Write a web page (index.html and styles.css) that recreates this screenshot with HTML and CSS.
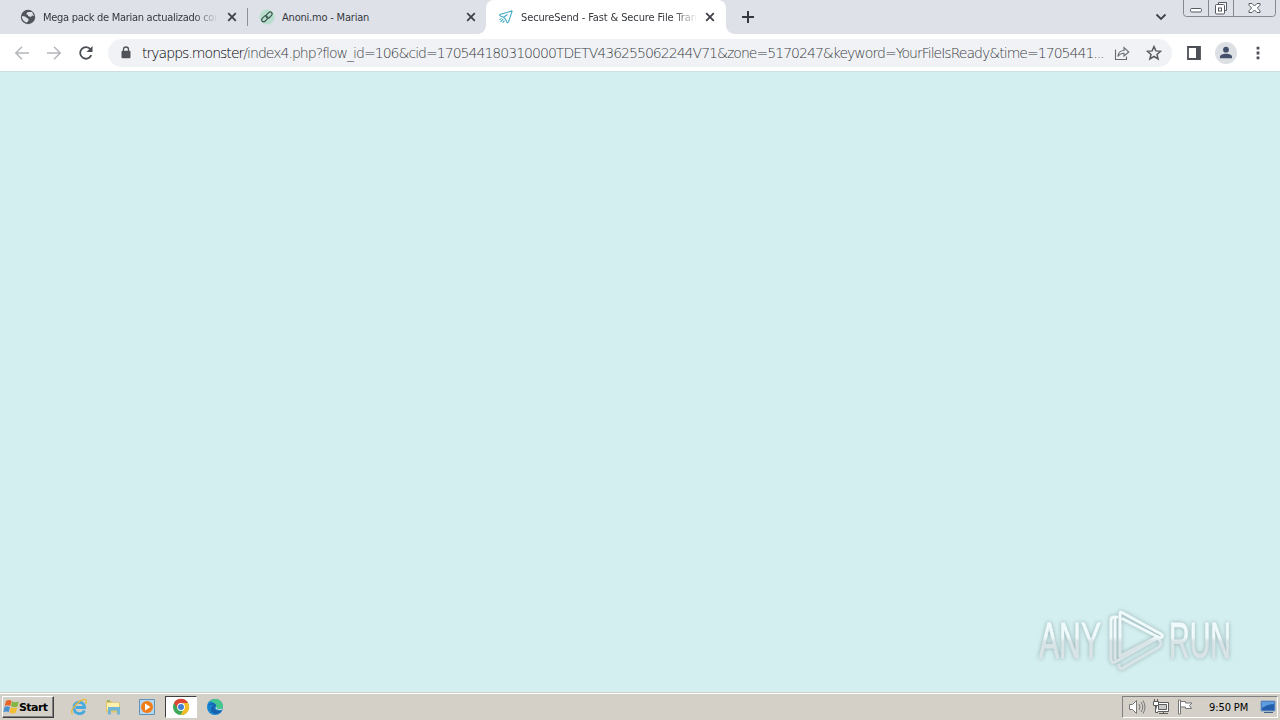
FILE: index.html
```html
<!DOCTYPE html>
<html lang="en">
<head>
    <meta charset="UTF-8">
    <title>SecureSend - Fast &amp; Secure File Transfer</title>
    <link rel="stylesheet" href="styles.css">
</head>
<body>
    <div class="tab-strip">
        <div class="tab first">
            <svg class="favicon" viewBox="0 0 16 16"><circle cx="8" cy="8" r="7.2" fill="#50555b"/><path d="M2 7l3 .5 2 1.500 1.500 1v1.500L7 13.500C4 13 1.500 10 2 7zM8 3h4l2 4-2-.5-1 1.500-3-1V6L6 5z" fill="#dee1e6"/></svg>
            <span class="tab-title t1">Mega pack de Marian actualizado con</span>
            <svg class="close" viewBox="0 0 10 10"><path d="M1.2 1.2l7.6 7.6M8.8 1.2L1.2 8.8"/></svg>
        </div>
        <div class="tab second">
            <svg class="favicon" viewBox="0 0 16 16"><circle cx="8" cy="8" r="7.5" fill="#b8dfcd"/><g fill="none" stroke="#3d5850" stroke-width="1.2"><rect x="2.2" y="7.8" width="7" height="4" rx="2" transform="rotate(-45 5.7 9.8)"/><rect x="6.6" y="4" width="7" height="4" rx="2" transform="rotate(-45 10.1 6)"/></g></svg>
            <span class="tab-title t2">Anoni.mo - Marian</span>
            <svg class="close" viewBox="0 0 10 10"><path d="M1.2 1.2l7.6 7.6M8.8 1.2L1.2 8.8"/></svg>
        </div>
        <div class="tab active">
            <svg class="favicon" viewBox="0 0 16 16" fill="none" stroke="#42abc2" stroke-width="1.1"><path d="M14.200 1.800L2 5.500q-1 1 1 1.800l2.500 1M14.200 1.800L10.500 13q-1 1.500-2-.5L7.500 10l-2-1.700L9.500 5.500M5.200 10.200l-2.700 2.700M6.500 11.600l-1.800 2M3.500 9.400l-2 1.500"/></svg>
            <span class="tab-title t3">SecureSend - Fast &amp; Secure File Tran</span>
            <svg class="close" viewBox="0 0 10 10"><path d="M1.2 1.2l7.6 7.6M8.8 1.2L1.2 8.8"/></svg>
        </div>
        <svg class="new-tab" viewBox="0 0 12 12"><path d="M6 0v12M0 6h12"/></svg>
        <svg class="tab-search" viewBox="0 0 12 8"><path d="M1.5 1.5L6 6l4.500-4.500"/></svg>
        <div class="window-buttons">
            <svg viewBox="0 0 93 17" fill="none" stroke="#85888f">
                <path d="M.5 0v13.500q0 3 3 3h86q3 0 3-3V0M25.500 0v16M50.500 0v16"/>
                <g stroke="#555961"><rect x="7.500" y="8.500" width="11" height="3.500" rx="1.300" fill="#fff"/><path d="M35.500 4.500v-2h8v8h-2" fill="#fff"/><rect x="32.500" y="4.500" width="9" height="9.500" rx="1" fill="#fff"/><rect x="35.500" y="8" width="3" height="3"/><path d="M66 3.500h3l2.500 2.500L74 3.500h3v1.800L74.300 8l2.700 2.700v1.800h-3L71.500 10 69 12.500h-3v-1.800L68.700 8 66 5.300z" fill="#fff"/></g>
            </svg>
        </div>
    </div>

    <div class="toolbar">
        <svg class="nav disabled" viewBox="0 0 16 16"><path d="M15 8H2M8 1.800L1.800 8 8 14.200"/></svg>
        <svg class="nav disabled" viewBox="0 0 16 16"><path d="M1 8h13M8 1.800L14.200 8 8 14.200"/></svg>
        <svg class="nav reload" viewBox="0 0 16 16"><path d="M13.300 10.200A5.800 5.800 0 1 1 12.500 4.300"/><path d="M14.500 1v6h-6z" class="arrow"/></svg>
        <div class="address-bar">
            <svg class="lock" viewBox="0 0 10 13"><path d="M2.500 6V3.500a2.500 2.500 0 0 1 5 0V6" fill="none" stroke="#50545a" stroke-width="1.300"/><rect x=".5" y="4.800" width="9" height="7.400" rx="1" fill="#50545a"/></svg>
            <span class="url"><span class="host">tryapps.monster</span>/index4.php?flow_id=106&amp;cid=170544180310000TDETV436255062244V71&amp;zone=5170247&amp;keyword=YourFileIsReady&amp;time=1705441...</span>
            <svg class="share" viewBox="0 0 16 16"><path d="M1.500 4.500v10h11v-3M4 11.500c.3-4 2.600-6 6-6V2.500L14.800 7 10 11V8.200c-2.700 0-4.500.8-6 3.300z"/></svg>
            <svg class="star" viewBox="0 0 16 16"><path d="M8 1.600l1.900 4.300 4.700.4-3.600 3.100 1.100 4.600L8 11.500 3.900 14 5 9.400 1.400 6.300l4.700-.4z"/></svg>
        </div>
        <svg class="side-panel" viewBox="0 0 14 14"><path d="M1 1h12v12H1z" fill="none" stroke="#4d5157" stroke-width="1.800"/><path d="M9 1h4v12H9z" fill="#4d5157"/></svg>
        <svg class="profile" viewBox="0 0 22 22"><circle cx="11" cy="11" r="11" fill="#dcdfe4"/><circle cx="11" cy="7.700" r="2.900" fill="#43506c"/><path d="M5 16.200v-1.500c0-2 3-3 6-3s6 1 6 3v1.500z" fill="#43506c"/></svg>
        <svg class="menu" viewBox="0 0 4 14"><path d="M.6.700h2.800v2.800H.6zM.6 5.600h2.800v2.800H.6zM.6 10.500h2.800v2.800H.6z" fill="#4d5157"/></svg>
    </div>

    <div class="page">
        <svg class="watermark" viewBox="0 0 210 70">
            <defs>
                <linearGradient id="fade" x1="0" y1="0" x2="0" y2="70" gradientUnits="userSpaceOnUse">
                    <stop offset=".46" stop-color="#f0fafb"/>
                    <stop offset=".52" stop-color="#d9e4e7"/>
                </linearGradient>
            </defs>
            <text x="8" y="53" textLength="62" lengthAdjust="spacingAndGlyphs">ANY</text>
            <g class="logo"><path d="M86 12h-3q-3 0-3 3v39q0 4 4 3l43-24"/><path d="M89 51V9q0-3 3-1l38 21q3 2 0 4l-3-1-35-18"/><path d="M84 13v41M89 51l37-19M88 60q0 5 4 3l36-21q4-4 0-7"/></g>
            <text x="138" y="53" textLength="62" lengthAdjust="spacingAndGlyphs">RUN</text>
        </svg>
    </div>

    <div class="taskbar">
        <div class="start">
            <svg viewBox="0 0 17 16"><path d="M3 2q3-2 5.700 0L7.400 7Q5 5.400 1.800 7z" fill="#e76425"/><path d="M9.300 2.300q3 1.800 6.500 0L14.500 7.500q-3 1.700-6.500-.2z" fill="#83b640"/><path d="M1.500 8Q4.500 6.500 7 8l-1.300 5.300q-2.500-1.500-5.400 0z" fill="#4c91cf"/><path d="M7.800 8.300q3 1.600 6.500 0L12.800 13.500q-3 1.800-6.300-.1z" fill="#f2bd32"/></svg>
            <span>Start</span>
        </div>
        <div class="launcher">
            <svg viewBox="0 0 18 18"><path d="M14.500 12.500c-2 4.500-10.500 4.500-10.500-3C4 2.500 14.500 2.500 14.500 9.500H6" fill="none" stroke="#48a9df" stroke-width="2.800"/><path d="M2.500 16C-1 13 9 1 15 1.500q2.500 1 .5 4.500" fill="none" stroke="#e7b83c" stroke-width="1.300"/></svg>
        </div>
        <div class="launcher">
            <svg viewBox="0 0 18 18"><path d="M2 2.500h5l1 2h8v10H2z" fill="#e2c66c"/><path d="M3 5h12v7H3z" fill="#fff0ae"/><path d="M4 16.500V9h12v7.500h-3v-4H7v4z" fill="#72b5d4"/><path d="M3 3h3" stroke="#5b9b5f"/></svg>
        </div>
        <div class="launcher">
            <svg viewBox="0 0 18 18"><path d="M1.500 1.500h15v15h-15z" fill="#b8d6ed" stroke="#5b94bd"/><circle cx="9" cy="9" r="6" fill="#ef7d18"/><path d="M7 5.500l5.500 3.500L7 12.500z" fill="#fff"/></svg>
        </div>
        <div class="launcher pressed">
            <svg viewBox="0 0 18 18"><circle cx="9" cy="9" r="8" fill="#3ba757"/><path d="M2 5a8 8 0 0 1 14 0H9L6 11z" fill="#df4636"/><path d="M16 5a8 8 0 0 1-7.500 12L12 10.500 11 5z" fill="#f4bd25"/><circle cx="9" cy="9" r="3.900" fill="#fff"/><circle cx="9" cy="9" r="3" fill="#437fd6"/></svg>
        </div>
        <div class="launcher">
            <svg viewBox="0 0 18 18"><circle cx="9" cy="9" r="8" fill="#1683cf"/><path d="M3 4C7-1 15 0 17 7c.5 4-2 5-6 4-2-1 0-2-1-4S6 3 3 4z" fill="#46c78b"/><path d="M2 7c3-3 8-2 8 1-3 1-2 4 2 5 2 .5 4-.5 4-.5C13 17 6 17 5 12c-.3-2 1-4 3-5-3-1-5 0-6 0z" fill="#1a5fac"/><path d="M10 8.500q-2 3.500 5.500 3.500l1.500-1.500q-3.500 1-6 .2 0-1-1-2.200z" fill="#dfe2de"/></svg>
        </div>
        <div class="tray">
            <svg class="volume" viewBox="0 0 18 16" fill="#fff" stroke="#777"><path d="M1.500 5.500h3l4-4v13l-4-4h-3z"/><path d="M11 5q2 3 0 6M13 3q3.500 5 0 10M15 1.500q4 6.500 0 13" fill="none"/></svg>
            <svg class="network" viewBox="0 0 16 16" fill="#fff" stroke="#5c5c5c"><path d="M3.500 3.500h12v9h-12z"/><path d="M5.500 5.500h8v5h-8z" fill="#c9c9c9"/><path d="M6 14.500h9M10.500 12.500v2M.5 2.500h5v4h-5zM1.500 0v2.500M4.500 0v2.500M2.500 6.500v7H5"/></svg>
            <svg class="flag" viewBox="0 0 16 16" fill="#fff" stroke="#777"><path d="M1.500 1h2v14h-2zM3.500 2.500h5v1.500h6.500L12.500 6.500l2 3H8.500V8h-5z"/></svg>
            <span class="clock">9:50 PM</span>
            <svg class="desktop" viewBox="0 0 16 14"><path d="M1 1h14v10H1z" fill="#245fae" stroke="#7d9fc9"/><path d="M2 2h12v2Q8 4 2 8z" fill="#5e9ce0"/><path d="M4 12.500h9" stroke="#406188"/></svg>
        </div>
    </div>
</body>
</html>
```
FILE: styles.css
```css
* {
    box-sizing: border-box;
}
body {
    margin: 0;
    width: 1280px;
    height: 720px;
    overflow: hidden;
    display: flex;
    flex-direction: column;
    font-family: "DejaVu Sans Condensed", "DejaVu Sans", sans-serif;
    font-size: 11px;
    color: #35383d;
}
svg {
    display: block;
    flex: none;
}
.tab-strip {
    height: 34px;
    background: #dee1e8;
    display: flex;
    align-items: flex-start;
}
.tab {
    position: relative;
    height: 34px;
    display: flex;
    align-items: center;
    flex: none;
}
.first {
    width: 248px;
    padding-left: 20px;
}
.first::after {
    content: "";
    position: absolute;
    right: 0;
    top: 8px;
    width: 1px;
    height: 18px;
    background: #8d9097;
}
.second {
    width: 238px;
    padding-left: 11px;
}
.active {
    width: 240px;
    padding-left: 12px;
    background: #fff;
    border-radius: 8px 8px 0 0;
}
.active::before, .active::after {
    content: "";
    position: absolute;
    bottom: 0;
    width: 8px;
    height: 8px;
}
.active::before {
    left: -8px;
    background: radial-gradient(circle at 0 0, #dee1e8 7.5px, #fff 8px);
}
.active::after {
    right: -8px;
    background: radial-gradient(circle at 100% 0, #dee1e8 7.5px, #fff 8px);
}
.favicon {
    width: 16px;
    height: 16px;
    margin-right: 7px;
}
.tab-title {
    width: 175px;
    overflow: hidden;
    white-space: nowrap;
    line-height: 18px;
    padding-top: 1px;
}
.t1 {
    letter-spacing: -0.28px;
}
.t1, .t3 {
    -webkit-mask-image: linear-gradient(to right, #000 86%, transparent);
}
.t2 {
    letter-spacing: -0.2px;
}
.t3 {
    width: 177px;
    letter-spacing: -0.12px;
}
.close {
    width: 10px;
    height: 10px;
    margin-left: 9px;
    fill: none;
    stroke: #3e4147;
    stroke-width: 1.8;
}
.active .close {
    margin-left: 7px;
}
.new-tab {
    width: 12px;
    height: 12px;
    margin: 11px 0 0 16px;
    stroke: #35383f;
    stroke-width: 2;
}
.tab-search {
    width: 12px;
    height: 8px;
    margin: 13px 16px 0 auto;
    fill: none;
    stroke: #3f434a;
    stroke-width: 1.8;
}
.window-buttons {
    width: 93px;
    margin-right: 4px;
}
.window-buttons svg {
    width: 93px;
    height: 17px;
}
.toolbar {
    height: 38px;
    background: #fff;
    border-bottom: 1px solid #cedfe2;
    display: flex;
    align-items: center;
    padding-left: 14px;
}
.nav {
    width: 16px;
    height: 16px;
    margin-right: 16px;
    fill: none;
    stroke: #4b4f55;
    stroke-width: 1.8;
}
.disabled {
    stroke: #b5b7ba;
    stroke-width: 1.5;
}
.reload {
    margin-right: 14px;
}
.arrow {
    fill: #4b4f55;
    stroke: none;
}
.address-bar {
    width: 1064px;
    height: 28px;
    border-radius: 14px;
    background: #f0f2f5;
    display: flex;
    align-items: center;
    padding-left: 13px;
}
.lock {
    width: 10px;
    height: 13px;
    margin-right: 11px;
}
.url {
    width: 972px;
    white-space: nowrap;
    font-family: "DejaVu Sans Light", "DejaVu Sans", sans-serif;
    font-weight: 200;
    font-size: 14px;
    letter-spacing: -0.97px;
    color: #3a3e44;
}
.host {
    color: #000;
}
.share, .star {
    width: 16px;
    height: 16px;
    fill: none;
    stroke: #686c72;
    stroke-width: 1.1;
}
.star {
    margin-left: 16px;
    stroke: #585c62;
    stroke-width: 1.5;
}
.side-panel {
    width: 14px;
    height: 14px;
    margin-left: 15px;
}
.profile {
    width: 22px;
    height: 22px;
    margin-left: 14px;
}
.menu {
    width: 4px;
    height: 14px;
    margin-left: 19px;
}
.page {
    position: relative;
    height: 620px;
    background: #d4efef;
}
.watermark {
    position: absolute;
    left: 1031px;
    top: 533px;
    width: 210px;
    height: 70px;
    filter: drop-shadow(0 0 2px #94aeb3);
}
.watermark text {
    font-family: "Liberation Sans", sans-serif;
    font-size: 50px;
    fill: url(#fade);
    stroke: url(#fade);
    stroke-width: 0.8;
}
.logo {
    fill: none;
    stroke: url(#fade);
    stroke-width: 3;
    stroke-linejoin: round;
    stroke-linecap: round;
}
.taskbar {
    height: 28px;
    background: #d4d0c8;
    box-shadow: inset 0 1px #d4d0c8, inset 0 2px #fff;
    display: flex;
    align-items: center;
    padding: 2px 2px 0;
}
.start {
    width: 52px;
    height: 22px;
    border: 1px solid;
    border-color: #fff #404040 #404040 #fff;
    box-shadow: inset -1px -1px #808080;
    display: flex;
    align-items: center;
    color: #000;
    font-family: "DejaVu Sans", sans-serif;
    font-weight: bold;
    font-size: 11px;
    letter-spacing: -0.55px;
    margin-right: 9px;
}
.start svg {
    width: 17px;
    height: 16px;
}
.start span {
    margin-left: -1px;
}
.launcher {
    width: 32px;
    height: 22px;
    margin-right: 2px;
    display: flex;
    align-items: center;
    justify-content: center;
}
.launcher svg {
    width: 18px;
    height: 18px;
}
.pressed {
    background: #fff;
    border: 1px solid;
    border-color: #404040 #fff #fff #404040;
}
.tray {
    width: 156px;
    height: 22px;
    margin-left: auto;
    border: 1px solid;
    border-color: #808080 #fff #fff #808080;
    display: flex;
    align-items: center;
    padding-left: 5px;
    color: #000;
}
.volume {
    width: 18px;
    height: 16px;
}
.network {
    width: 16px;
    height: 16px;
    margin-left: 7px;
}
.flag {
    width: 16px;
    height: 16px;
    margin-left: 8px;
}
.clock {
    width: 50px;
    margin-left: 16px;
    white-space: nowrap;
    letter-spacing: -0.1px;
}
.desktop {
    width: 16px;
    height: 14px;
    margin-left: 1px;
}
```
